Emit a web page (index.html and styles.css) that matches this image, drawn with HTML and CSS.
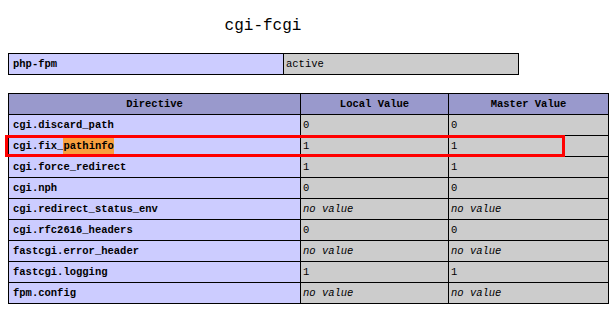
FILE: index.html
```html
<!DOCTYPE html>
<html>
<head>
<meta charset="utf-8">
<link rel="stylesheet" href="styles.css">
</head>
<body>
<div class="page">
  <h2 class="title">cgi-fcgi</h2>
  <table class="info short">
    <colgroup><col class="c-a"><col class="c-b"></colgroup>
    <tr><td class="e">php-fpm</td><td class="v">active</td></tr>
  </table>
  <table class="info long">
    <colgroup><col class="c-1"><col class="c-2"><col class="c-3"></colgroup>
    <tr class="h"><th>Directive</th><th>Local Value</th><th>Master Value</th></tr>
    <tr><td class="e">cgi.discard_path</td><td class="v">0</td><td class="v">0</td></tr>
    <tr><td class="e">cgi.fix_<span class="mark">pathinfo</span></td><td class="v">1</td><td class="v">1</td></tr>
    <tr><td class="e">cgi.force_redirect</td><td class="v">1</td><td class="v">1</td></tr>
    <tr><td class="e">cgi.nph</td><td class="v">0</td><td class="v">0</td></tr>
    <tr><td class="e">cgi.redirect_status_env</td><td class="v"><i>no value</i></td><td class="v"><i>no value</i></td></tr>
    <tr><td class="e">cgi.rfc2616_headers</td><td class="v">0</td><td class="v">0</td></tr>
    <tr><td class="e">fastcgi.error_header</td><td class="v"><i>no value</i></td><td class="v"><i>no value</i></td></tr>
    <tr><td class="e">fastcgi.logging</td><td class="v">1</td><td class="v">1</td></tr>
    <tr><td class="e">fpm.config</td><td class="v"><i>no value</i></td><td class="v"><i>no value</i></td></tr>
  </table>
  <div class="redbox"></div>
</div>
</body>
</html>
```
FILE: styles.css
```css
html, body {
  margin: 0;
  padding: 0;
  background: #fff;
}
body {
  padding: 8px;
  font-family: "Liberation Mono", "DejaVu Sans Mono", monospace;
  color: #000;
}
.page {
  position: relative;
  display: flow-root;
  width: 600px;
}
.title {
  width: 510px;
  margin: 8px 0 17px;
  font-size: 16px;
  line-height: 20px;
  font-weight: normal;
  text-align: center;
}
.info {
  border-collapse: collapse;
  table-layout: fixed;
  font-size: 10.5px;
}
.info td, .info th {
  border: 1px solid #000;
  height: 20px;
  line-height: 20px;
  padding: 0 4px;
  white-space: nowrap;
  overflow: hidden;
  vertical-align: middle;
}
.short { width: 510px; }
.c-a { width: 275px; }
.c-b { width: 235px; }
.long { width: 600px; margin-top: 18px; }
.c-1 { width: 292px; }
.c-2 { width: 148px; }
.c-3 { width: 160px; }
.h th {
  background: #9999cc;
  font-weight: bold;
  text-align: center;
}
.e {
  background: #ccccff;
  font-weight: bold;
  text-align: left;
}
.v {
  background: #cccccc;
  text-align: left;
  padding-left: 2px !important;
}
.v i { font-style: italic; }
.mark {
  background: #f99f3e;
  padding: 2px 0;
}
.redbox {
  position: absolute;
  left: -3px;
  top: 127px;
  width: 560px;
  height: 22px;
  box-sizing: border-box;
  border: 3px solid #ff0000;
}
```
